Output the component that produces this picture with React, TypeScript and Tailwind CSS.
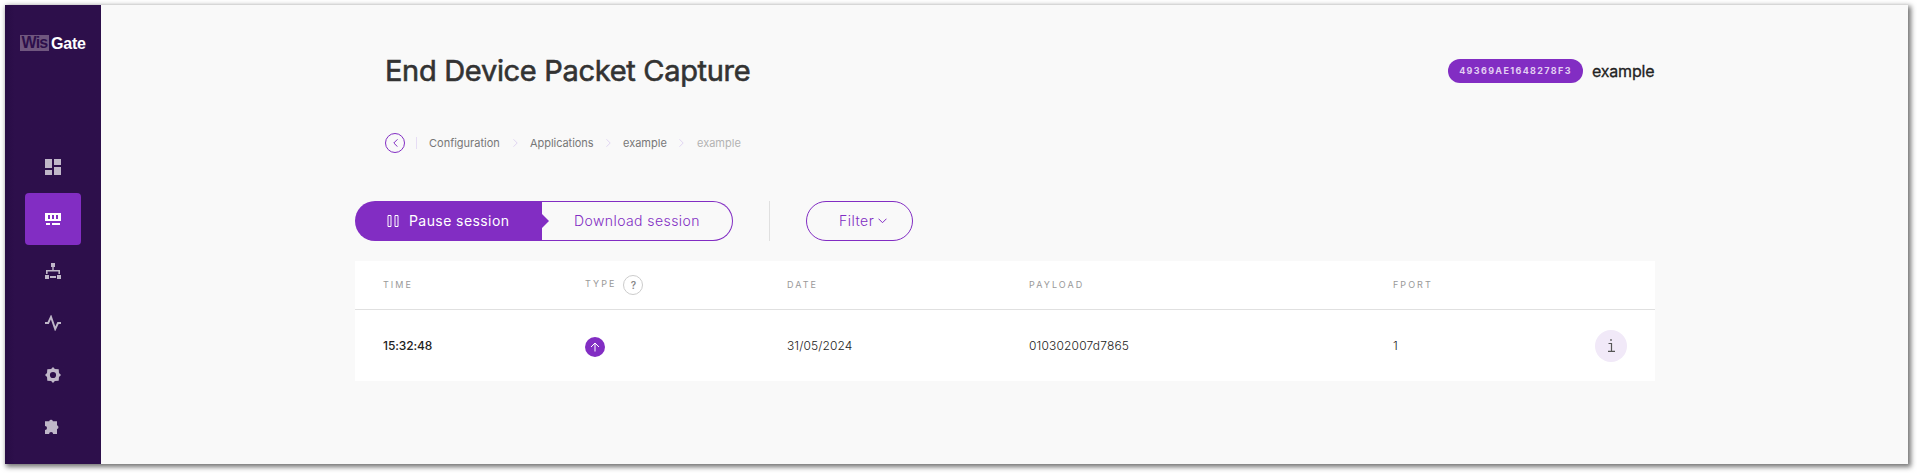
import type { ReactNode } from "react";

function Svg({ children, size = 16 }: { children: ReactNode; size?: number }) {
  return (
    <svg width={size} height={size} viewBox={`0 0 ${size} ${size}`} fill="currentColor">
      {children}
    </svg>
  );
}

const navIcons = [
  <Svg key="dashboard">
    <path d="M0 0h7v9H0zM9 0h7v6H9zM0 11h7v5H0zM9 8h7v8H9z" />
  </Svg>,
  <Svg key="gateway">
    <path
      fillRule="evenodd"
      d="M0 2h16v8H0zM3 4v4h2V4zM7 4v4h2V4zM11 4v4h2V4zM1 12h4v2H1zM7 12h8v2H7z"
    />
  </Svg>,
  <Svg key="network">
    <path d="M6 0h4v4H6zM7.3 4h1.4v3H15v4h-1.6V8.5H2.6V11H1V7h6.3zM0 12h4v4H0zM12 12h4v4h-4zM5 13h6v2H5z" />
  </Svg>,
  <Svg key="activity">
    <path
      d="M0 8h3.2L6 1.9 10.2 14 13 8h3"
      fill="none"
      stroke="currentColor"
      strokeWidth="1.9"
    />
  </Svg>,
  <Svg key="settings">
    <path
      fillRule="evenodd"
      d="M8 0l1.9 2 3.8.3.3 3.8L16 8l-2 1.9-.3 3.8-3.8.3L8 16l-1.9-2-3.8-.3L2 9.9 0 8l2-1.9.3-3.8L6.1 2zM8 4.9a3.1 3.1 0 1 0 0 6.2 3.1 3.1 0 0 0 0-6.2z"
    />
  </Svg>,
  <Svg key="extensions">
    <path d="M0 2.2h4.2a1.9 1.9 0 0 1 3.7 0H12v4.1a1.9 1.9 0 0 1 0 3.7v5H8.1a2 2 0 0 0-4 0H0v-4.1a2 2 0 0 0 0-4z" />
  </Svg>,
];

function Sidebar() {
  return (
    <aside className="flex h-full w-24 shrink-0 flex-col items-center bg-[#2d0f4b] bg-linear-to-r from-[#280c45] to-[#2d0f4b] to-10%">
      <div className="mt-[30px] flex h-4 w-[66px] items-center font-['Liberation_Sans',sans-serif] text-[16px] leading-4 font-bold">
        <span className="flex h-4 w-[29px] shrink-0 items-center justify-center bg-[#70577f] tracking-[-0.8px] text-[#2d0f4b]">
          Wis
        </span>
        <span className="ml-0.5 pt-px tracking-[-0.2px] text-white">Gate</span>
      </div>
      <nav className="mt-[90px] flex flex-col items-center">
        {navIcons.map((icon, i) => (
          <a
            key={i}
            className={
              i === 1
                ? "flex h-[52px] w-14 items-center justify-center rounded bg-[#822dc3] text-white"
                : "flex h-[52px] w-14 items-center justify-center text-[#c0b7c9]"
            }
          >
            {icon}
          </a>
        ))}
      </nav>
    </aside>
  );
}

function Chevron() {
  return (
    <svg width="5" height="8" viewBox="0 0 5 8" fill="none" stroke="#e0d5f2">
      <path d="M.5.3 4.2 4 .5 7.7" />
    </svg>
  );
}

function Breadcrumbs() {
  return (
    <div className="ml-[30px] flex h-5 items-center text-[11px] leading-5 text-[#777]">
      <button className="flex size-5 items-center justify-center rounded-full border border-[#822dc3]">
        <svg width="5" height="8" viewBox="0 0 5 8" fill="none" stroke="#822dc3">
          <path d="M4.5.3.8 4l3.7 3.7" />
        </svg>
      </button>
      <span className="ml-[11px] h-3 w-px bg-[#e6ddf4]" />
      <span className="ml-3 w-[71px]">Configuration</span>
      <span className="ml-[13px] flex"><Chevron /></span>
      <span className="ml-[12px] w-[64px] tracking-[-0.05px]">Applications</span>
      <span className="ml-[12px] flex"><Chevron /></span>
      <span className="ml-[12px] w-[44px]">example</span>
      <span className="ml-[12px] flex"><Chevron /></span>
      <span className="ml-[13px] text-[#b3b3b3]">example</span>
    </div>
  );
}

function Toolbar() {
  return (
    <div className="flex h-10 items-center text-[14px] tracking-[0.42px]">
      <button className="flex h-10 w-[187px] items-center rounded-l-full bg-[#822dc3] text-white">
        <svg className="ml-8" width="12" height="12" viewBox="0 0 12 12" fill="none" stroke="#fff">
          <path d="M1 .5h3v11H1zM8 .5h3v11H8z" />
        </svg>
        <span className="ml-[10px] pb-px">Pause session</span>
      </button>
      <button className="flex h-10 w-[191px] items-center rounded-r-full border border-l-0 border-[#822dc3] text-[#822dc3]">
        <svg width="7" height="14" viewBox="0 0 7 14" fill="#822dc3">
          <path d="M0 0l7 7-7 7z" />
        </svg>
        <span className="ml-[25px] pb-px font-[350]">Download session</span>
      </button>
      <span className="ml-9 h-10 w-px bg-[#e0e0e0]" />
      <button className="ml-9 flex h-10 w-[107px] items-center rounded-full border border-[#822dc3] pl-8 text-[#822dc3]">
        <span className="pb-px font-[350] tracking-[0.5px]">Filter</span>
        <svg className="ml-1" width="9" height="6" viewBox="0 0 9 6" fill="none" stroke="#822dc3">
          <path d="M.5.7 4.5 4.7l4-4" />
        </svg>
      </button>
    </div>
  );
}

function PacketTable() {
  return (
    <div className="mt-5 h-[120px] w-[1300px] bg-white">
      <div className="grid h-[49px] grid-cols-[202px_202px_242px_364px_1fr] items-center border-b border-[#e0e0e0] pl-7 text-[9px] leading-none tracking-[2.05px] text-[#999]">
        <span className="pb-0.5">TIME</span>
        <span className="flex items-center">
          <span className="pb-1">TYPE</span>
          <span className="ml-[7px] flex size-5 items-center justify-center rounded-full border border-[#ccc] text-[10px] font-semibold tracking-normal text-[#888]">
            ?
          </span>
        </span>
        <span className="pb-0.5">DATE</span>
        <span className="pb-0.5">PAYLOAD</span>
        <span className="pb-0.5">FPORT</span>
      </div>
      <div className="grid h-[71px] grid-cols-[202px_202px_242px_364px_1fr] items-center pl-7 text-[12px] text-[#222]">
        <span className="font-medium tracking-[-0.1px]">15:32:48</span>
        <span className="mt-0.5 flex size-5 items-center justify-center rounded-full bg-[#822dc3]">
          <svg width="10" height="10" viewBox="0 0 10 10" fill="none" stroke="#fff">
            <path d="M5 9.5V1M1 5l4-4 4 4" />
          </svg>
        </span>
        <span className="font-[350] tracking-[0.1px]">31/05/2024</span>
        <span className="font-[350] tracking-[0.17px]">010302007d7865</span>
        <span className="flex items-center justify-between font-light">
          1
          <span className="mr-7 flex size-8 items-center justify-center rounded-full bg-[#f1e9f8] text-[#555]">
            <svg width="8" height="13" viewBox="0 0 8 13" fill="none" stroke="currentColor">
              <path d="M4 0v2M1.5 4.5h3V12M1 12.4h7" strokeWidth="1.2" />
            </svg>
          </span>
        </span>
      </div>
    </div>
  );
}

export default function App() {
  return (
    <div className="h-[473px] w-[1917px] overflow-hidden bg-white p-[5px] font-['Inter',sans-serif]">
      <div className="flex h-[459px] w-[1903px] bg-[#f9f9f9] shadow-[2px_2px_5px_1px_rgba(0,0,0,0.55)]">
        <Sidebar />
        <main className="ml-[254px] w-[1300px]">
          <header className="mt-[46px] flex h-10 items-center justify-between pl-[30px]">
            <h1 className="text-[29px] leading-10 tracking-[-0.31px] text-[#333] [-webkit-text-stroke:0.6px_#333]">
              End Device Packet Capture
            </h1>
            <div className="flex items-center">
              <span className="flex h-6 w-[135px] items-center justify-center rounded-full bg-[#822dc3] pb-px text-[9px] font-bold tracking-[1.35px] text-[#e3cff2]">
                49369AE1648278F3
              </span>
              <span className="ml-[9px] w-[63px] text-[16px] tracking-[-0.2px] text-[#222] [-webkit-text-stroke:0.3px_#222]">
                example
              </span>
            </div>
          </header>
          <div className="mt-[42px]">
            <Breadcrumbs />
          </div>
          <div className="mt-12">
            <Toolbar />
            <PacketTable />
          </div>
        </main>
      </div>
    </div>
  );
}
